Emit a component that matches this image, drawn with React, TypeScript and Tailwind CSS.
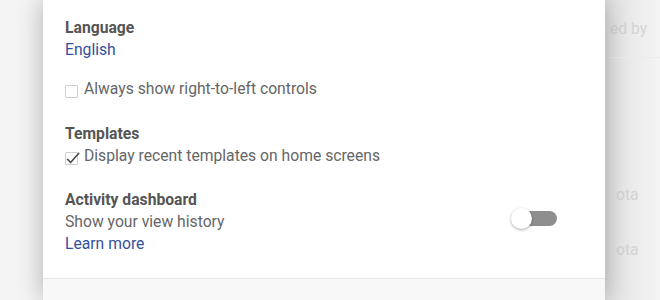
import React from "react";

// Settings dialog: language, templates and activity dashboard rows
const Checkbox = ({ checked }: { checked?: boolean }) => (
  <span className="relative mt-[7px] inline-block h-[13px] w-[13px] shrink-0 rounded-[1px] border border-[#cfcfcf] bg-white">
    {checked && (
      <svg className="absolute -left-px -top-[3px] h-[16px] w-[16px]" viewBox="0 0 16 16" fill="none">
        <path d="M2.5 9.2 L5.6 12.6 L13.8 3.2" stroke="#444" strokeWidth="1.5" strokeLinecap="round" strokeLinejoin="round" />
      </svg>
    )}
  </span>
);

const Toggle = () => (
  <div className="relative h-[21px] w-[46px] shrink-0">
    <div className="absolute left-[8px] top-[3px] h-[15px] w-[38px] rounded-full bg-[#8e8e8e]" />
    <div className="absolute left-0 top-0 h-[21px] w-[21px] rounded-full bg-white shadow-[0_1px_3px_rgba(0,0,0,0.35)]" />
  </div>
);

export default function App() {
  return (
    <div className="flex h-[300px] w-[660px] overflow-hidden bg-[#f4f4f4] font-['Roboto',sans-serif] text-[15.7px] leading-[22px]">
      <div className="w-[43px] shrink-0" />

      <div className="relative z-10 flex w-[562px] shrink-0 flex-col bg-white shadow-[0_0_24px_rgba(0,0,0,0.28)]">
        <div className="pl-[22px] pr-[48px] pt-[17px]">
          <div className="font-bold text-[#555]">Language</div>
          <div className="text-[#34509d]">English</div>

          <label className="mt-[17px] flex items-start gap-[6px] text-[#666]">
            <Checkbox />
            <span>Always show right-to-left controls</span>
          </label>

          <div className="mt-[23px] font-bold text-[#555]">Templates</div>
          <label className="flex items-start gap-[6px] text-[#666]">
            <Checkbox checked />
            <span>Display recent templates on home screens</span>
          </label>

          <div className="mt-[22px] flex items-start justify-between">
            <div>
              <div className="font-bold text-[#555]">Activity dashboard</div>
              <div className="text-[#666]">Show your view history</div>
              <a className="text-[#34509d]">Learn more</a>
            </div>
            <div className="mt-[19px]">
              <Toggle />
            </div>
          </div>
        </div>

        <div className="mt-auto h-[22px] border-t border-[#e8e8e8] bg-[#f8f8f8]" />
      </div>

      <div className="flex flex-1 flex-col bg-gradient-to-r from-[#e2e2e2] to-[#f4f4f4] pl-[5px] text-[#d4d4d4]">
        <div className="mt-[18px] whitespace-nowrap">ed by</div>
        <div className="mt-[17px] h-px w-full bg-[#ececec]" />
        <div className="mt-[126px] whitespace-nowrap pl-[6px]">ota</div>
        <div className="mt-[33px] whitespace-nowrap pl-[6px]">ota</div>
      </div>
    </div>
  );
}
